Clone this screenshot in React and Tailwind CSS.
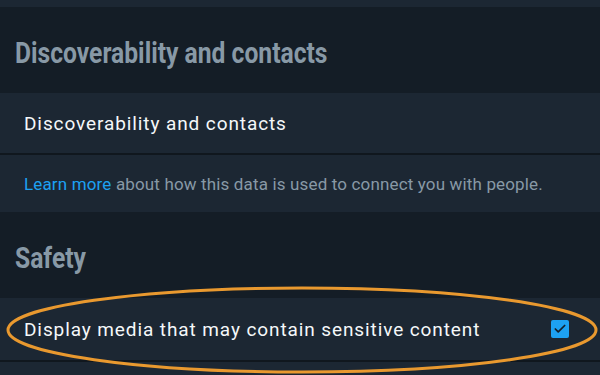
import { Check } from "lucide-react";

const SectionHeader = ({ title }) => (
  <div className="flex h-[86px] items-center bg-[#141d26] px-[15px] pt-[7px]">
    <h2 className="origin-left scale-x-[0.85] text-[29px] font-bold leading-none text-[#8899a6]">{title}</h2>
  </div>
);

const App = () => {
  return (
    <div
      className="relative h-[375px] w-[600px] overflow-hidden bg-[#1c2733]"
      style={{ fontFamily: "Roboto, 'Liberation Sans', sans-serif" }}
    >
      <div className="h-[7px] bg-[#1c2733]" />
      <SectionHeader title="Discoverability and contacts" />
      <div className="flex h-[60px] items-center bg-[#1c2733] px-6 pt-[3px] text-[19px] tracking-[0.9px] text-[#f5f8fa]">
        Discoverability and contacts
      </div>
      <div className="h-[2px] bg-[#10171e]" />
      <div className="flex h-[57px] items-center bg-[#1c2733] px-6 pt-[3px] text-[17px] tracking-[0.15px] text-[#8899a6]">
        <p>
          <span className="text-[#1da1f2]">Learn more</span> about how this data is used to connect you with people.
        </p>
      </div>
      <SectionHeader title="Safety" />
      <div className="flex h-[62px] items-center justify-between bg-[#1c2733] pl-6 pr-[31px] pt-[3px] text-[19px] tracking-[0.9px] text-[#f5f8fa]">
        <span>Display media that may contain sensitive content</span>
        <span className="-mt-[3px] flex h-[18px] w-[18px] items-center justify-center rounded-[2px] bg-[#1da1f2]">
          <Check size={14} strokeWidth={3} className="text-[#14202b]" />
        </span>
      </div>
      <div className="h-[2px] bg-[#10171e]" />

      <svg className="pointer-events-none absolute left-0 top-0" width="600" height="375">
        <ellipse cx="302" cy="330" rx="294" ry="42" fill="none" stroke="#e9992f" strokeWidth="3" />
      </svg>
    </div>
  );
};

export default App;
